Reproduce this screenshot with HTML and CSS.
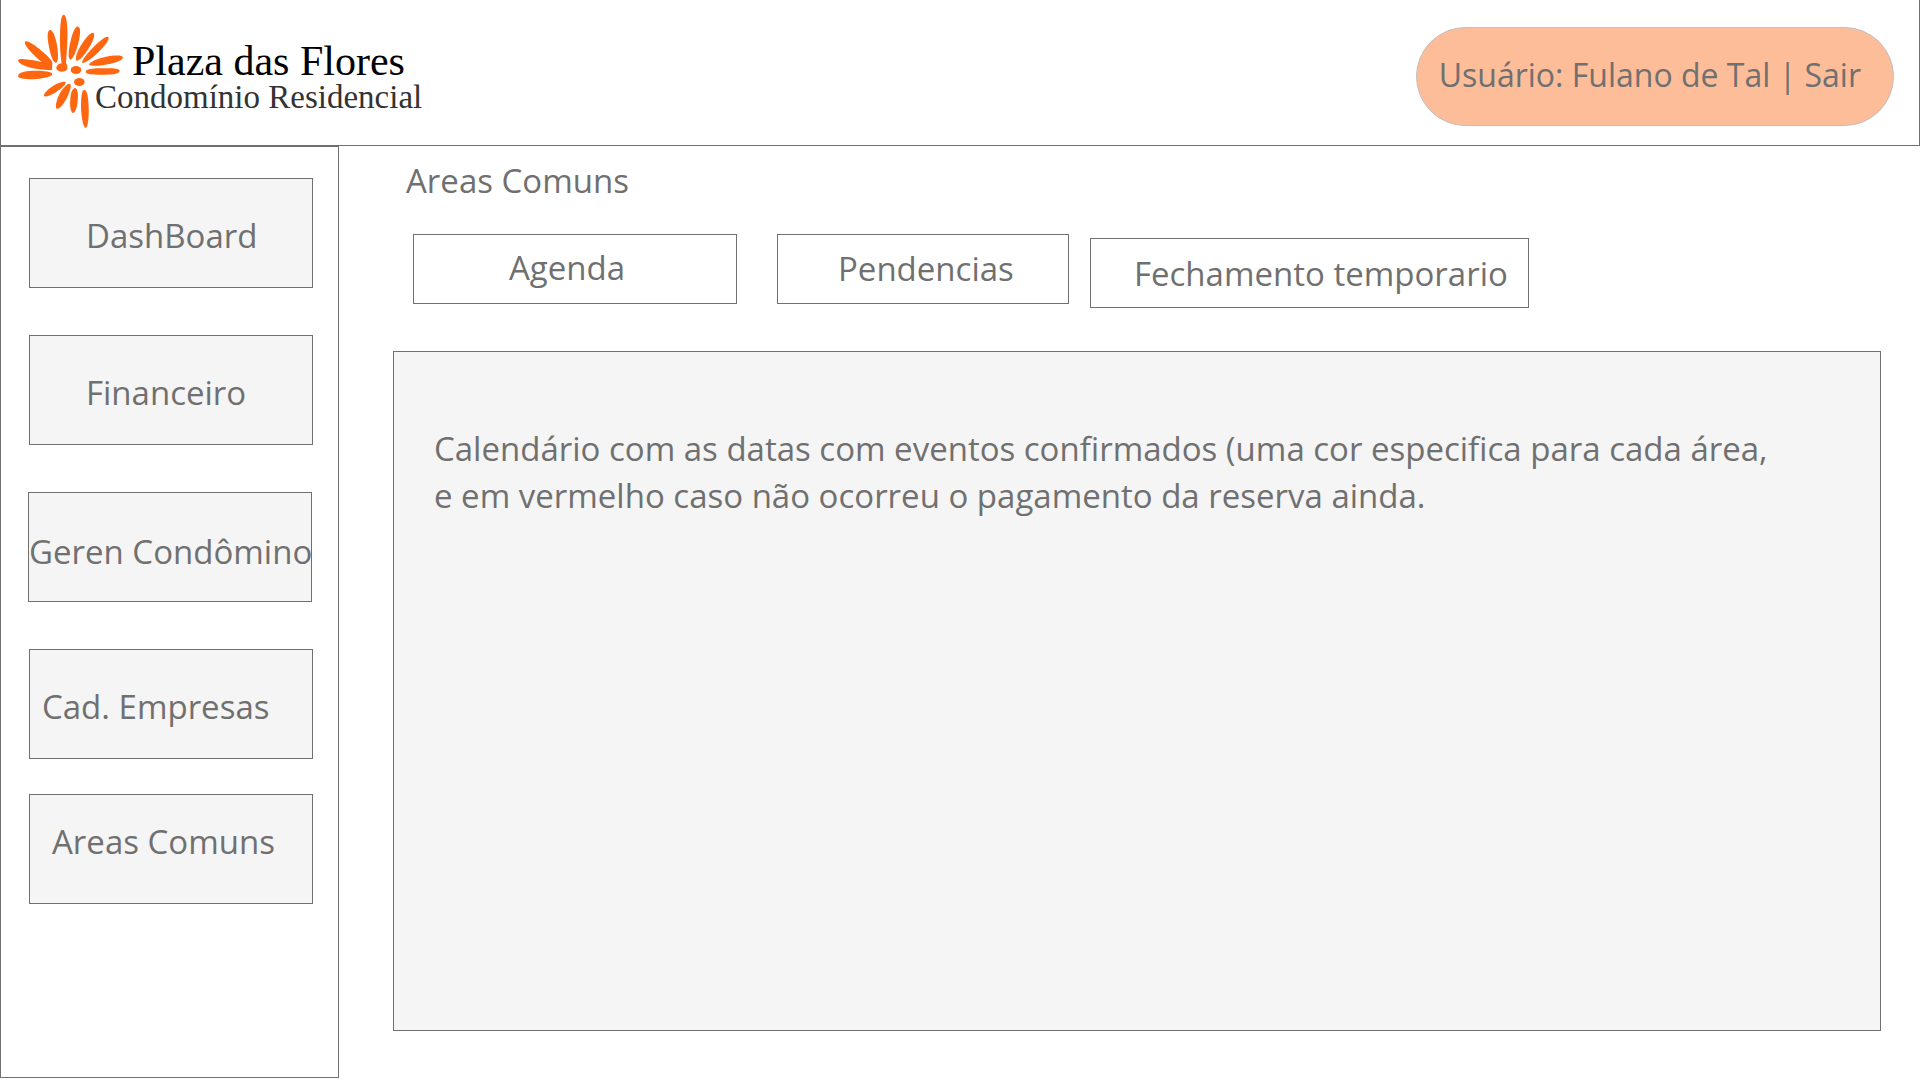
FILE: index.html
```html
<!DOCTYPE html>
<html lang="pt-BR">
<head>
  <meta charset="utf-8">
  <meta name="viewport" content="width=device-width, initial-scale=1">
  <title>Plaza das Flores - Areas Comuns</title>
  <link rel="stylesheet" href="styles.css">
</head>
<body>
  <header class="header">
    <div class="brand">
      <svg class="brand-flower" viewBox="54 42 318 345" aria-hidden="true">
        <path d="M191 44C202 44 204 95 202 130L198 190C203 196 204 207 199 211C192 217 175 217 170 208C167 199 173 192 185 190C181 165 179 130 180 105C181 70 183 45 191 44Z"/>
        <path d="M149 90C157 88 165 105 170 130C174 150 177 185 169 188C159 192 149 155 146 135C142 115 141 93 149 90Z"/>
        <path d="M235 80C243 83 241 103 236 125C231 148 219 179 211 179C203 177 206 145 212 122C218 98 226 77 235 80Z"/>
        <path d="M280 99C287 104 279 123 268 142C255 163 239 184 230 182C223 177 232 154 243 136C255 117 272 95 280 99Z"/>
        <path d="M325 111C330 117 317 134 301 151C283 170 256 191 247 189C243 183 265 156 283 139C300 122 319 106 325 111Z"/>
        <path d="M368 171C372 178 354 186 332 191C308 197 272 200 267 194C267 187 292 176 315 171C341 166 365 165 368 171Z"/>
        <path d="M257 215C258 206 285 204 310 205C335 204 357 205 359 212C359 221 342 223 315 224C285 224 257 224 257 215Z"/>
        <path d="M75 125C82 120 105 136 124 152C140 165 155 178 157 188L156 210C135 210 112 208 92 203C70 197 51 188 55 180C59 174 82 178 101 181L126 186C111 175 70 137 75 125Z"/>
        <path d="M54 227C56 215 82 212 108 212C133 212 156 215 157 222C157 230 133 235 110 237C84 239 54 237 54 227Z"/>
        <ellipse cx="228" cy="210" rx="16" ry="12"/>
        <ellipse cx="238" cy="246" rx="16" ry="12"/>
        <path d="M196 246C201 252 184 265 169 276C153 286 136 293 132 288C130 281 145 267 159 258C173 249 192 243 196 246Z"/>
        <path d="M210 252C216 256 209 276 201 293C192 311 177 329 170 326C164 321 170 298 179 281C188 265 204 248 210 252Z"/>
        <path d="M225 264C234 265 235 285 233 304C231 323 225 340 219 339C211 337 209 315 211 297C212 279 217 264 225 264Z"/>
        <path d="M253 269C262 270 265 295 266 322C267 351 264 383 257 384C249 383 244 350 243 322C243 295 245 269 253 269Z"/>
      </svg>
      <div class="brand-text">
        <span class="brand-name">Plaza das Flores</span>
        <span class="brand-tagline">Condomínio Residencial</span>
      </div>
    </div>
    <div class="user">Usuário: Fulano de Tal | <a class="user-exit" href="#sair">Sair</a></div>
  </header>
  <div class="layout">
    <nav class="sidebar" aria-label="Menu principal">
      <button class="menu-item menu-item-indented" type="button">DashBoard</button>
      <button class="menu-item menu-item-indented" type="button">Financeiro</button>
      <button class="menu-item menu-item-full" type="button">Geren Condômino</button>
      <button class="menu-item menu-item-companies" type="button">Cad. Empresas</button>
      <button class="menu-item menu-item-areas" type="button">Areas Comuns</button>
    </nav>
    <main class="main">
      <h1 class="title">Areas Comuns</h1>
      <div class="tabs">
        <button class="tab tab-agenda" type="button">Agenda</button>
        <button class="tab tab-pending" type="button">Pendencias</button>
        <button class="tab tab-closing" type="button">Fechamento temporario</button>
      </div>
      <section class="panel">
        <p class="panel-text">Calendário com as datas com eventos confirmados (uma cor especifica para cada área, e em vermelho caso não ocorreu o pagamento da reserva ainda.</p>
      </section>
    </main>
  </div>
</body>
</html>
```
FILE: styles.css
```css
* {
  box-sizing: border-box;
}

body {
  display: flex;
  flex-direction: column;
  min-height: 100vh;
  margin: 0;
  background: #fff;
  color: #707070;
  font: 33px/47px "Open Sans", "Noto Sans", sans-serif;
}

button {
  font: inherit;
  color: inherit;
  text-align: left;
  white-space: nowrap;
  cursor: pointer;
}

.header {
  display: flex;
  align-items: flex-start;
  justify-content: space-between;
  height: 146px;
  padding: 14px 25px 0 17px;
  border: 1px solid #707070;
  border-top: 0;
}

.brand {
  display: flex;
}

.brand-flower {
  width: 106px;
  height: 115px;
  fill: #ff6610;
}

.brand-text {
  display: flex;
  flex-direction: column;
  margin: 23px 0 0 -29px;
  font-family: "Liberation Serif", serif;
  white-space: nowrap;
}

.brand-name {
  padding-left: 37px;
  color: #000;
  font-size: 42px;
  line-height: 48px;
}

.brand-tagline {
  color: #333;
  font-size: 33px;
  line-height: 24px;
}

.user {
  height: 99px;
  margin-top: 13px;
  padding: 23px 32px 0 22px;
  border: 1px solid #c0c0c0;
  border-radius: 50px;
  background: #fdbd99;
  font-size: 32px;
  white-space: nowrap;
}

.user-exit {
  color: inherit;
  text-decoration: none;
}

.layout {
  display: flex;
  flex: 1;
}

.sidebar {
  display: flex;
  flex-direction: column;
  flex: none;
  width: 339px;
  margin-bottom: 2px;
  padding: 31px 25px 31px 28px;
  border: 1px solid #707070;
}

.menu-item {
  height: 110px;
  margin-bottom: 47px;
  padding: 5px 0 0 12px;
  border: 1px solid #707070;
  background: #f5f5f5;
}

.menu-item-indented {
  padding-left: 56px;
}

.menu-item-full {
  margin-right: 1px;
  margin-left: -1px;
  padding: 9px 0 0;
}

.menu-item-companies {
  margin-bottom: 35px;
}

.menu-item-areas {
  padding: 0 0 16px 22px;
}

.main {
  display: flex;
  flex: 1;
  flex-direction: column;
  padding: 11px 39px 49px 54px;
}

.title {
  margin: 0 0 30px 13px;
  font: inherit;
}

.tabs {
  display: flex;
  align-items: flex-start;
  margin: 0 0 43px 20px;
}

.tab {
  height: 70px;
  padding: 0;
  border: 1px solid #707070;
  background: #fff;
}

.tab-agenda {
  width: 324px;
  margin-right: 40px;
  padding: 0 0 4px 95px;
}

.tab-pending {
  width: 292px;
  margin-right: 21px;
  padding: 0 0 2px 60px;
}

.tab-closing {
  width: 439px;
  margin-top: 4px;
  padding-left: 43px;
}

.panel {
  flex: 1;
  padding: 73px 90px 72px 40px;
  border: 1px solid #707070;
  background: #f5f5f5;
}

.panel-text {
  margin: 0;
}
```
